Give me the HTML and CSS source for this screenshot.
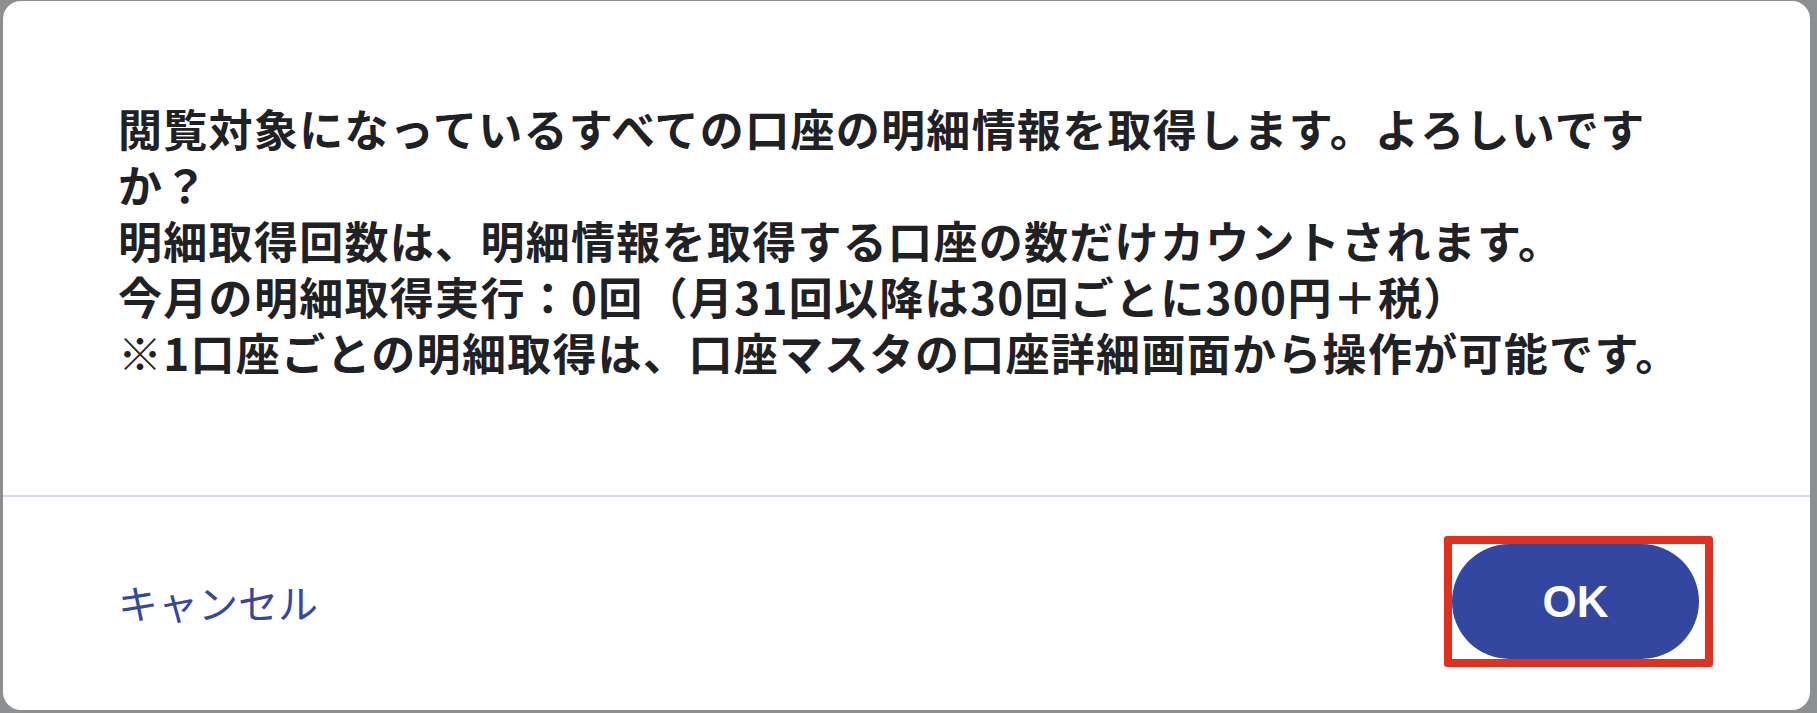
FILE: index.html
```html
<!DOCTYPE html>
<html lang="ja">
<head>
<meta charset="utf-8">
<title>明細取得の確認</title>
<link rel="stylesheet" href="styles.css">
</head>
<body>
<div class="dialog">
  <div class="dialog-body">
    <p class="message">閲覧対象になっているすべての口座の明細情報を取得します。よろしいですか？<br>明細取得回数は、明細情報を取得する口座の数だけカウントされます。<br>今月の明細取得実行：0回（月31回以降は30回ごとに300円＋税）<br>※1口座ごとの明細取得は、口座マスタの口座詳細画面から操作が可能です。</p>
  </div>
  <div class="dialog-footer">
    <button class="btn-cancel" type="button">キャンセル</button>
    <div class="highlight">
      <button class="btn-ok" type="button">OK</button>
    </div>
  </div>
</div>
</body>
</html>
```

FILE: styles.css
```css
html, body {
  margin: 0;
  padding: 0;
}
body {
  width: 1817px;
  height: 713px;
  background: #8d8e90;
  overflow: hidden;
  font-family: "Noto Sans CJK JP", "Noto Sans", sans-serif;
}
.dialog {
  margin: 1px 7px 0 3px;
  height: 709px;
  background: #ffffff;
  border-radius: 18px;
  display: flex;
  flex-direction: column;
  box-sizing: border-box;
}
.dialog-body {
  height: 496px;
  box-sizing: border-box;
  padding: 99px 115px 0 115px;
  border-bottom: 2px solid #d9dce8;
}
.message {
  margin: 0;
  font-size: 44px;
  line-height: 56px;
  font-weight: 700;
  color: #1f2125;
  letter-spacing: 1.3px;
  line-break: strict;
}
.dialog-footer {
  flex: 1;
  display: flex;
  align-items: center;
  justify-content: space-between;
  padding: 0 97px 4px 115px;
}
.btn-cancel {
  border: none;
  background: none;
  padding: 0;
  font-family: "Noto Sans CJK JP", "Noto Sans", sans-serif;
  font-size: 40px;
  font-weight: 400;
  color: #3447a3;
  cursor: pointer;
  line-height: 1;
}
.highlight {
  border: 8px solid #e2301f;
  border-radius: 3px;
  padding: 0 6px 0 0;
  display: flex;
}
.btn-ok {
  width: 247px;
  height: 115px;
  border: none;
  border-radius: 58px;
  background: #3346a0;
  color: #ffffff;
  font-family: "Liberation Sans", Arial, sans-serif;
  font-size: 44px;
  font-weight: 700;
  cursor: pointer;
}
```
